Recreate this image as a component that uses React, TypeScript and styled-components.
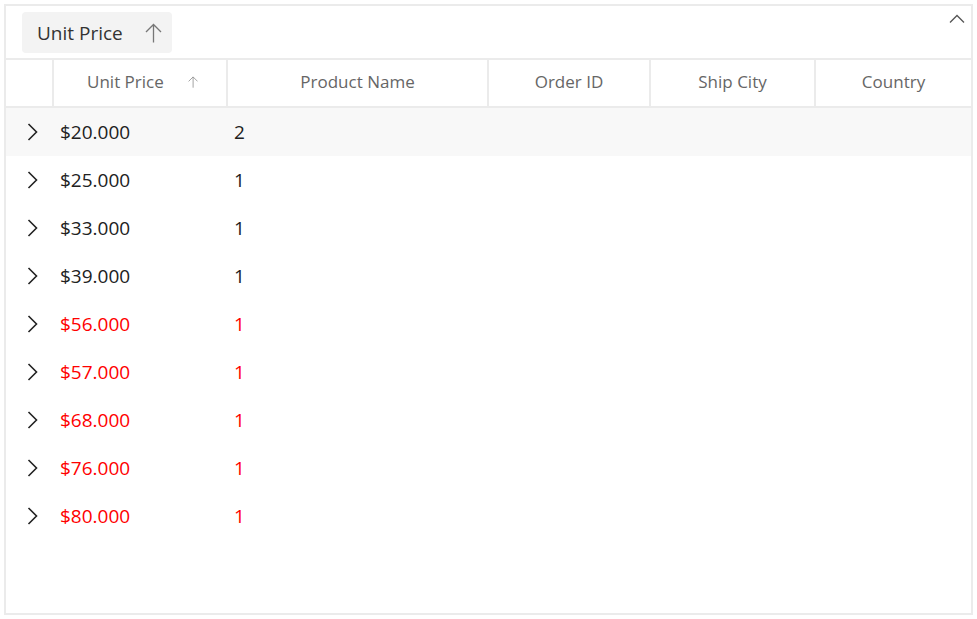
import React from "react";
import styled, { createGlobalStyle } from "styled-components";

const Global = createGlobalStyle`
  html, body { margin: 0; padding: 0; background: #fff; }
  body { font-family: "Open Sans", "Noto Sans", sans-serif; }
  * { box-sizing: border-box; }
`;

const COLS = "48px 174px 261px 162px 165px 155px";

const Grid = styled.div`
  margin: 4px;
  width: 969px;
  height: 611px;
  border: 2px solid #ebebeb;
  display: flex;
  flex-direction: column;
  background: #fff;
`;

const GroupBar = styled.div`
  height: 52px;
  padding: 6px 6px 0 16px;
  display: flex;
  justify-content: space-between;
  align-items: flex-start;
`;

const Chip = styled.div`
  height: 41px;
  padding: 0 10px 0 15px;
  background: #f3f3f3;
  border-radius: 4px;
  display: flex;
  align-items: center;
  gap: 22px;
  font-size: 19px;
  color: #333;
`;

const CollapseBtn = styled.div`
  margin-top: 2px;
  width: 16px;
  height: 10px;
  display: flex;
  color: #555;
`;

const HeaderRow = styled.div`
  display: grid;
  grid-template-columns: ${COLS};
  height: 50px;
  border-top: 2px solid #ebebeb;
  border-bottom: 2px solid #ebebeb;
`;

const HeaderCell = styled.div<{ $last?: boolean; $sorted?: boolean }>`
  display: flex;
  align-items: center;
  justify-content: center;
  gap: 24px;
  padding-bottom: 3px;
  padding-left: ${(p) => (p.$sorted ? "5px" : "0")};
  font-size: 17px;
  color: #666;
  border-right: ${(p) => (p.$last ? "none" : "2px solid #ebebeb")};
`;

const Body = styled.div`
  display: flex;
  flex-direction: column;
`;

const Row = styled.div<{ $hover?: boolean; $red?: boolean }>`
  display: grid;
  grid-template-columns: ${COLS};
  height: 48px;
  align-items: center;
  background: ${(p) => (p.$hover ? "#f8f8f8" : "transparent")};
  color: ${(p) => (p.$red ? "#ff0000" : "#212121")};
  font-size: 19px;
`;

const ExpandCell = styled.div`
  display: flex;
  justify-content: center;
  padding-left: 4px;
  color: #222;
`;

const Cell = styled.div`
  padding-left: 6px;
`;

const ArrowUp = ({ size, color }: { size: number; color: string }) => (
  <svg width={size * 0.85} height={size} viewBox="0 0 17 20" fill="none">
    <path d="M8.5 19.5V1.5M1 9L8.5 1.5L16 9" stroke={color} strokeWidth="1.3" />
  </svg>
);

const Chevron = () => (
  <svg width="11" height="18" viewBox="0 0 11 18" fill="none">
    <path d="M1.5 1L9.5 9L1.5 17" stroke="currentColor" strokeWidth="1.6" />
  </svg>
);

const Caret = () => (
  <svg width="16" height="10" viewBox="0 0 16 10" fill="none">
    <path d="M1 8.5L8 1.5L15 8.5" stroke="currentColor" strokeWidth="1.3" />
  </svg>
);

const rows = [
  { price: "$20.000", count: 2, red: false },
  { price: "$25.000", count: 1, red: false },
  { price: "$33.000", count: 1, red: false },
  { price: "$39.000", count: 1, red: false },
  { price: "$56.000", count: 1, red: true },
  { price: "$57.000", count: 1, red: true },
  { price: "$68.000", count: 1, red: true },
  { price: "$76.000", count: 1, red: true },
  { price: "$80.000", count: 1, red: true },
];

export default function App() {
  return (
    <>
      <Global />
      <Grid>
        <GroupBar>
          <Chip>
            Unit Price
            <ArrowUp size={20} color="#777" />
          </Chip>
          <CollapseBtn>
            <Caret />
          </CollapseBtn>
        </GroupBar>
        <HeaderRow>
          <HeaderCell />
          <HeaderCell $sorted>
            Unit Price
            <ArrowUp size={12} color="#888" />
          </HeaderCell>
          <HeaderCell>Product Name</HeaderCell>
          <HeaderCell>Order ID</HeaderCell>
          <HeaderCell>Ship City</HeaderCell>
          <HeaderCell $last>Country</HeaderCell>
        </HeaderRow>
        <Body>
          {rows.map((r, i) => (
            <Row key={r.price} $hover={i === 0} $red={r.red}>
              <ExpandCell>
                <Chevron />
              </ExpandCell>
              <Cell>{r.price}</Cell>
              <Cell>{r.count}</Cell>
            </Row>
          ))}
        </Body>
      </Grid>
    </>
  );
}
